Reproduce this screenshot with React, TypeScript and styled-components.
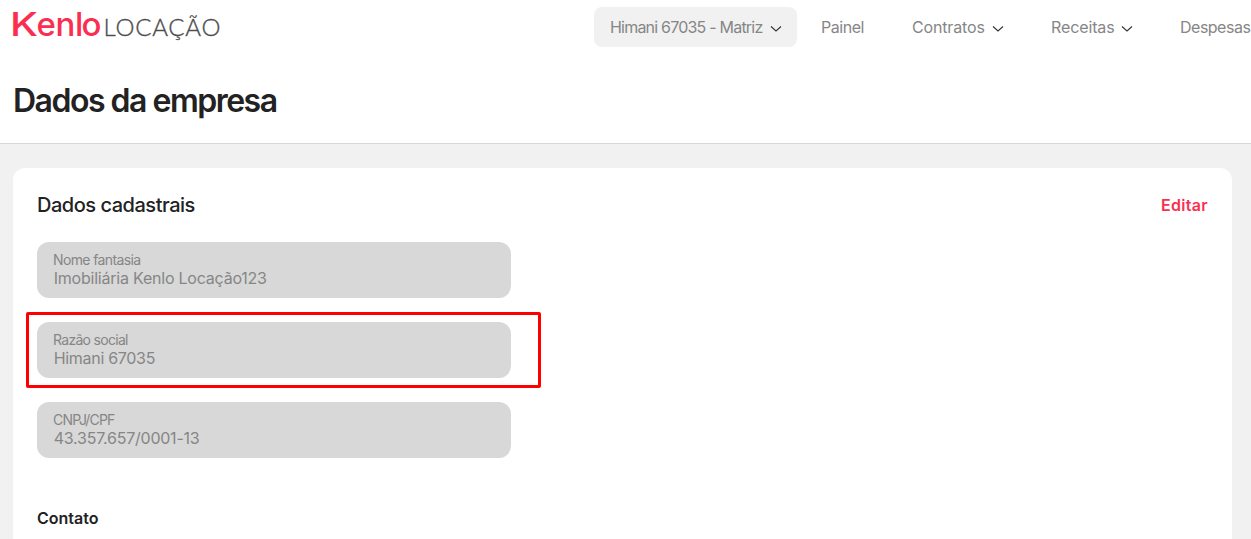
import React from 'react';
import styled, { createGlobalStyle } from 'styled-components';

const GlobalStyle = createGlobalStyle`
  * {
    box-sizing: border-box;
  }

  body {
    margin: 0;
    overflow: hidden;
    background-color: #f1f1f1;
    color: #222;
    font-family: Inter, 'Liberation Sans', sans-serif;
  }
`;

const menu = [
  { label: 'Painel', width: 43, gap: 48, spacing: -0.45, hasArrow: false },
  { label: 'Contratos', width: 73, gap: 47, spacing: -0.15, hasArrow: true },
  { label: 'Receitas', width: 63, gap: 47, spacing: -0.12, hasArrow: true },
  { label: 'Despesas', width: 71, gap: 0, spacing: -0.5, hasArrow: false },
];

const fields = [
  { label: 'Nome fantasia', value: 'Imobiliária Kenlo Locação123', labelSpacing: -0.62, spacing: -0.22 },
  { label: 'Razão social', value: 'Himani 67035', labelSpacing: -0.7, spacing: -0.3, highlighted: true },
  { label: 'CNPJ/CPF', value: '43.357.657/0001-13', labelSpacing: -0.82, spacing: -0.23 },
];

const Logo: React.FC = () => (
  <LogoSvg width="210" height="44" viewBox="0 0 210 44">
    <KenloText y="36">
      <tspan x="-3" textLength="28" lengthAdjust="spacingAndGlyphs">
        K
      </tspan>
      <tspan x="23.5 42.5 62 68.5">enlo</tspan>
    </KenloText>
    <ProductText x="90.5" y="36" textLength="117">
      LOCAÇÃO
    </ProductText>
  </LogoSvg>
);

const Arrow: React.FC = () => (
  <ArrowSvg width="12" height="8" viewBox="0 0 12 8">
    <path d="M1 1.5L6 6L11 1.5" />
  </ArrowSvg>
);

const App: React.FC = () => (
  <>
    <GlobalStyle />
    <Header>
      <TopBar>
        <Logo />
        <Nav>
          <CompanySelect>
            <NavLabel $width={153} $spacing={-0.79}>
              Himani 67035 - Matriz
            </NavLabel>
            <Arrow />
          </CompanySelect>
          {menu.map((item) => (
            <NavItem key={item.label} $gap={item.gap}>
              <NavLabel $width={item.width} $spacing={item.spacing}>
                {item.label}
              </NavLabel>
              {item.hasArrow ? <Arrow /> : null}
            </NavItem>
          ))}
        </Nav>
      </TopBar>
      <PageTitle>Dados da empresa</PageTitle>
    </Header>
    <Card>
      <CardHeader>
        <CardTitle>Dados cadastrais</CardTitle>
        <EditButton>Editar</EditButton>
      </CardHeader>
      <FieldList>
        {fields.map((field) => (
          <Field key={field.label}>
            <FieldLabel $spacing={field.labelSpacing}>{field.label}</FieldLabel>
            <FieldValue $spacing={field.spacing}>{field.value}</FieldValue>
            {field.highlighted ? <Highlight /> : null}
          </Field>
        ))}
      </FieldList>
      <SectionTitle>Contato</SectionTitle>
    </Card>
  </>
);

const Header = styled.header`
  height: 144px;
  background-color: #fff;
  border-bottom: 1px solid #d8d8d8;
`;

const TopBar = styled.div`
  display: flex;
  height: 54px;
  padding-left: 13px;
`;

const LogoSvg = styled.svg`
  flex: none;
  margin-right: 371px;
  overflow: visible;
`;

const KenloText = styled.text`
  fill: #fb2e50;
  font-size: 33px;
  font-weight: 500;
`;

const ProductText = styled.text`
  fill: #4d4d4d;
  stroke: #4d4d4d;
  stroke-width: 0.35px;
  font-family: Lato, sans-serif;
  font-size: 24px;
  font-weight: 300;
`;

const Nav = styled.nav`
  display: flex;
  flex: none;
  align-items: center;
  height: 40px;
  margin-top: 7px;
  color: #868686;
  font-size: 16px;
  line-height: 24px;
  white-space: nowrap;
`;

const ArrowSvg = styled.svg`
  flex: none;
  margin-top: 3px;
  fill: none;
  stroke: #333;
  stroke-width: 1.1px;
`;

const CompanySelect = styled.div`
  display: flex;
  align-items: center;
  gap: 7px;
  width: 203px;
  height: 40px;
  margin-right: 24px;
  padding-left: 16px;
  background-color: #f1f1f1;
  border-radius: 8px;
`;

const NavItem = styled.div<{ $gap: number }>`
  display: flex;
  align-items: center;
  gap: 7px;
  margin-right: ${({ $gap }) => $gap}px;
`;

const NavLabel = styled.span<{ $width: number; $spacing: number }>`
  width: ${({ $width }) => $width}px;
  letter-spacing: ${({ $spacing }) => $spacing}px;
`;

const PageTitle = styled.h1`
  margin: 25px 13px 0;
  font-size: 32px;
  font-weight: 600;
  line-height: 44px;
  letter-spacing: -1.5px;
`;

const Card = styled.main`
  height: 371px;
  margin: 24px 19px 0 13px;
  padding: 24px 24px 0;
  background-color: #fff;
  border-radius: 12px 12px 0 0;
`;

const CardHeader = styled.div`
  display: flex;
  align-items: center;
  justify-content: space-between;
  height: 26px;
`;

const CardTitle = styled.h2`
  margin: 0;
  font-size: 20px;
  font-weight: 500;
  letter-spacing: -0.48px;
`;

const EditButton = styled.button`
  padding: 0;
  color: #fb2e50;
  background: none;
  border: 0;
  font-family: inherit;
  font-size: 16px;
  font-weight: 600;
  letter-spacing: 0.3px;
`;

const FieldList = styled.div`
  display: flex;
  flex-direction: column;
  gap: 24px;
  width: 474px;
  margin-top: 24px;
`;

const Field = styled.div`
  position: relative;
  display: flex;
  flex-direction: column;
  height: 56px;
  padding: 9px 16px;
  color: #868686;
  background-color: #d8d8d8;
  border-radius: 12px;
`;

const FieldLabel = styled.span<{ $spacing: number }>`
  font-size: 14px;
  line-height: 18px;
  letter-spacing: ${({ $spacing }) => $spacing}px;
`;

const FieldValue = styled.span<{ $spacing: number }>`
  padding-left: 0.7px;
  font-size: 16px;
  line-height: 18px;
  letter-spacing: ${({ $spacing }) => $spacing}px;
`;

// Outline drawn around the field, wider than the field itself
const Highlight = styled.div`
  position: absolute;
  top: -10px;
  right: -30px;
  bottom: -10px;
  left: -11px;
  border: 3px solid #fe0000;
  border-radius: 2px;
`;

const SectionTitle = styled.h3`
  margin: 48px 0 0;
  font-size: 16px;
  font-weight: 600;
  line-height: 24px;
`;

export default App;
